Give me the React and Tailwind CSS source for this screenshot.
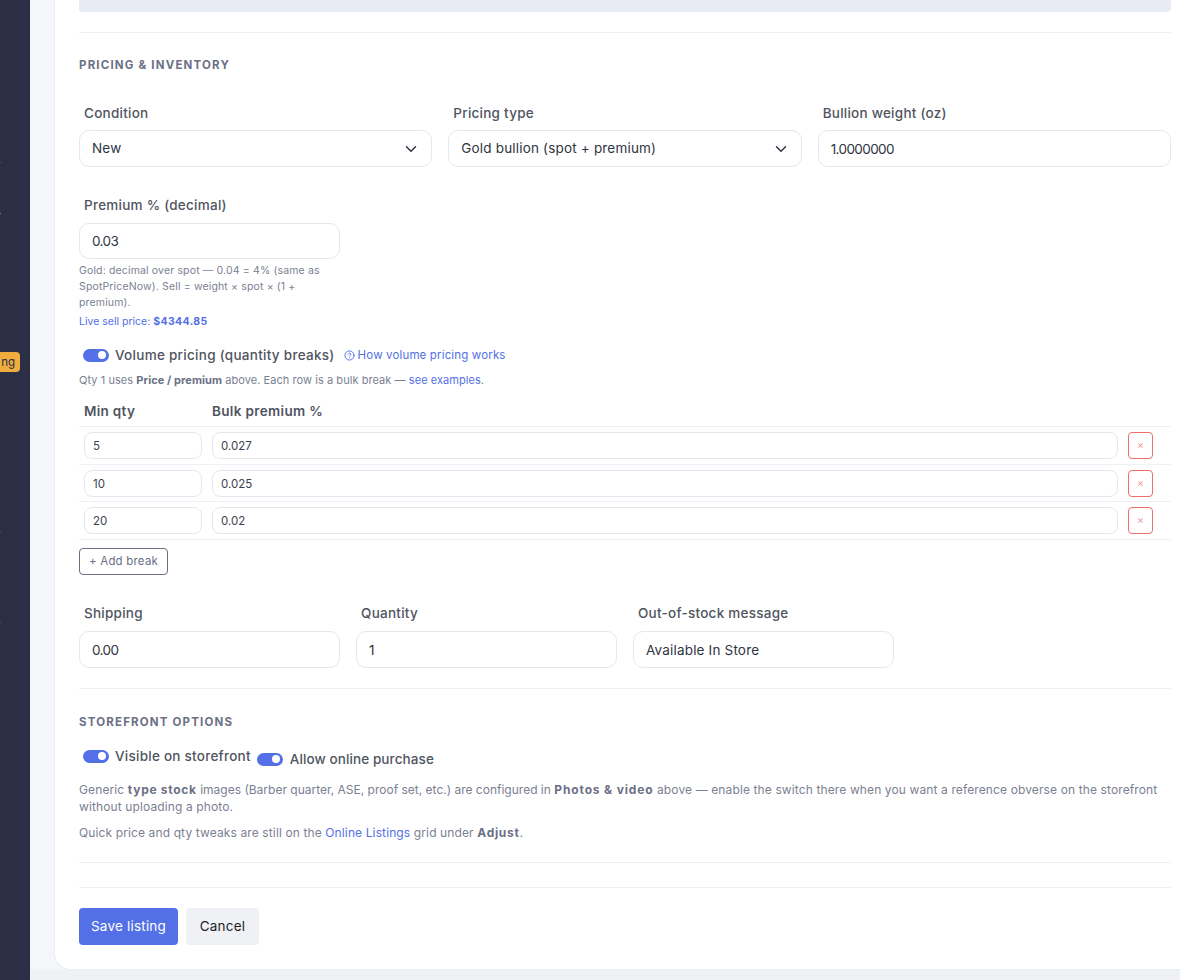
import React from "react";
import { ChevronDown, ChevronUp, CircleHelp, X } from "lucide-react";

const inputCls = "block w-full px-3 bg-white border border-[#e3e7f0] rounded-[10px] text-[13.5px] text-[#2f3542] outline-none";
const numberCls = inputCls + " h-[37px] tracking-[-0.6px]";
const textCls = inputCls + " h-[37px] tracking-[0.18px]";
const smallInputCls = "block w-full h-[27px] px-2 bg-white border border-[#e3e7f0] rounded-lg text-[11.5px] text-[#3d4250] outline-none";

function Field({ label, gap = "mb-[7px]", children }) {
  return (
    <div>
      <label className={"block pl-[5px] text-[13.5px] leading-5 font-medium tracking-[0.25px] text-[#50545f] " + gap}>{label}</label>
      {children}
    </div>
  );
}

function Select({ value }) {
  return (
    <div className={textCls + " flex items-center justify-between"}>
      <span>{value}</span>
      <ChevronDown className="w-[18px] h-[18px] mr-[-1px] text-[#2f3542]" strokeWidth={2} />
    </div>
  );
}

function Toggle() {
  return (
    <span className="flex items-center justify-end w-[26px] h-[13px] rounded-full bg-[#5370e6] pr-[3px] shrink-0">
      <span className="w-[8px] h-[8px] rounded-full bg-white" />
    </span>
  );
}

function SectionTitle({ children }) {
  return <h3 className="text-[11.5px] leading-4 font-bold uppercase tracking-[1.18px] text-[#6c7085]">{children}</h3>;
}

// row heights differ by a pixel in the original table
const BREAKS = [
  { qty: "5", pct: "0.027", h: "h-[38px]" },
  { qty: "10", pct: "0.025", h: "h-[37px]" },
  { qty: "20", pct: "0.02", h: "h-[38px]" },
];

export default function App() {
  return (
    <div className="flex h-[980px] overflow-hidden bg-[#f0f1f4] font-['Inter','Liberation_Sans',sans-serif]">
      <aside className="relative w-[30px] shrink-0 bg-[#2a2f45] overflow-hidden">
        <ChevronDown className="absolute left-[-9px] top-[158px] w-3 h-3 text-[#8b90ad]" />
        <ChevronUp className="absolute left-[-9px] top-[206px] w-3 h-3 text-white" />
        <ChevronDown className="absolute left-[-9px] top-[528px] w-3 h-3 text-[#8b90ad]" />
        <ChevronDown className="absolute left-[-9px] top-[618px] w-3 h-3 text-[#8b90ad]" />
        <span className="absolute right-[10px] top-[352px] h-5 pl-6 pr-[5px] rounded bg-[#f0ad3e] text-[11.5px] leading-5 text-[#2a2f45]">ng</span>
      </aside>

      <div className="flex-1 min-w-0 pb-[10px]">
        <div className="bg-[#f5f6f9] pl-6 h-full">
          <main className="h-full bg-white border-l border-b border-[#e8ecf3] rounded-bl-[16px] pl-6 pr-[9px]">
            <div className="h-3 bg-[#e8ebf4] rounded-b" />
            <hr className="mt-5 border-[#edf0f5]" />

            <div className="mt-6">
              <SectionTitle>Pricing &amp; inventory</SectionTitle>
            </div>

            <div className="mt-[30px] grid grid-cols-3 gap-4">
              <Field label="Condition"><Select value="New" /></Field>
              <Field label="Pricing type"><Select value="Gold bullion (spot + premium)" /></Field>
              <Field label="Bullion weight (oz)"><input className={numberCls} defaultValue="1.0000000" /></Field>
            </div>

            <div className="mt-[28px] grid grid-cols-4 gap-4">
              <div>
                <Field label="Premium % (decimal)" gap="mb-2"><input className={inputCls + " h-9 tracking-[-0.6px]"} defaultValue="0.03" /></Field>
                <p className="mt-1 text-[10.5px] leading-4 tracking-[0.15px] text-[#7b7f92]">Gold: decimal over spot — 0.04 = 4% (same as SpotPriceNow). Sell = weight × spot × (1 + premium).</p>
                <p className="mt-[3px] text-[10.5px] leading-4 text-[#5370e6]">Live sell price: <b className="font-bold tracking-[0.4px]">$4344.85</b></p>
              </div>
            </div>

            <div className="mt-[15px] flex items-center pl-1 h-5">
              <Toggle />
              <span className="ml-[6px] text-[13.5px] font-medium tracking-[0.28px] text-[#50545f]">Volume pricing (quantity breaks)</span>
              <a className="ml-[9px] mt-px flex items-center gap-[3px] text-[11.5px] tracking-[0.15px] text-[#5370e6]"><CircleHelp className="w-[11px] h-[11px]" />How volume pricing works</a>
            </div>
            <p className="mt-[7px] text-[11px] leading-4 tracking-[0.06px] text-[#7b7f92]">
              Qty 1 uses <b className="font-bold text-[#6c7085]">Price / premium</b> above. Each row is a bulk break — <a className="text-[#5370e6]">see examples</a>.
            </p>

            <div className="mt-[11px]">
              <div className="grid grid-cols-[128px_1fr_48px] h-[28px] items-center border-b border-[#edf0f5] pb-[2px]">
                <span className="pl-[5px] text-[13.5px] font-semibold tracking-[0.3px] text-[#50545f]">Min qty</span>
                <span className="pl-[5px] text-[13.5px] font-semibold tracking-[0.35px] text-[#50545f]">Bulk premium %</span>
              </div>
              {BREAKS.map((b) => (
                <div key={b.qty} className={"grid grid-cols-[128px_1fr_48px] items-start pt-[5px] border-b border-[#edf0f5] " + b.h}>
                  <div className="px-[5px]"><input className={smallInputCls} defaultValue={b.qty} /></div>
                  <div className="px-[5px]"><input className={smallInputCls} defaultValue={b.pct} /></div>
                  <div className="pl-[5px]">
                    <button className="flex items-center justify-center w-[25px] h-[27px] border border-[#f36c6c] rounded text-[#f58a8a]"><X className="w-[7px] h-[7px]" strokeWidth={3.5} /></button>
                  </div>
                </div>
              ))}
            </div>
            <button className="mt-2 block h-[27px] px-[9px] border border-[#6c7085] rounded text-[11.5px] tracking-[0.2px] text-[#6c7085]">+ Add break</button>

            <div className="mt-[28px] grid grid-cols-4 gap-4">
              <Field label="Shipping" gap="mb-2"><input className={numberCls} defaultValue="0.00" /></Field>
              <Field label="Quantity" gap="mb-2"><input className={numberCls} defaultValue="1" /></Field>
              <Field label="Out-of-stock message" gap="mb-2"><input className={textCls} defaultValue="Available In Store" /></Field>
            </div>

            <hr className="mt-5 border-[#edf0f5]" />

            <div className="mt-[25px]">
              <SectionTitle>Storefront options</SectionTitle>
            </div>

            <div className="mt-4 flex items-start">
              <div className="flex items-center pl-1 h-5">
                <Toggle />
                <span className="ml-[6px] text-[13.5px] font-medium tracking-[0.25px] text-[#50545f]">Visible on storefront</span>
              </div>
              <div className="flex items-center ml-[6px] mt-[3px] h-5">
                <Toggle />
                <span className="ml-[7px] text-[13.5px] font-medium tracking-[0.1px] text-[#50545f]">Allow online purchase</span>
              </div>
            </div>

            <p className="mt-[12px] text-[12px] leading-[17px] tracking-[0.12px] text-[#7b7f92]">
              Generic <b className="font-bold tracking-[0.7px] text-[#6c7085]">type stock</b> <span className="tracking-normal">images (Barber quarter, ASE, proof set, etc.) are configured in</span> <b className="font-bold tracking-[0.85px] text-[#6c7085]">Photos &amp; video</b> above — enable the switch there when you want a reference obverse on the storefront without uploading a photo.
            </p>
            <p className="mt-[9px] text-[12px] leading-[17px] tracking-[0.12px] text-[#7b7f92]">
              Quick price and qty tweaks are still on the <a className="text-[#5370e6]">Online Listings</a> grid under <b className="font-bold tracking-[0.7px] text-[#6c7085]">Adjust</b>.
            </p>

            <hr className="mt-[21px] border-[#edf0f5]" />
            <hr className="mt-6 border-[#edf0f5]" />

            <div className="mt-5 flex gap-2">
              <button className="h-[37px] w-[99px] rounded bg-[#5370e6] text-[13.5px] tracking-[0.2px] text-white">Save listing</button>
              <button className="h-[37px] w-[73px] rounded bg-[#eff1f5] text-[13.5px] tracking-[0.2px] text-[#1c1f28]">Cancel</button>
            </div>
          </main>
        </div>
      </div>
    </div>
  );
}
